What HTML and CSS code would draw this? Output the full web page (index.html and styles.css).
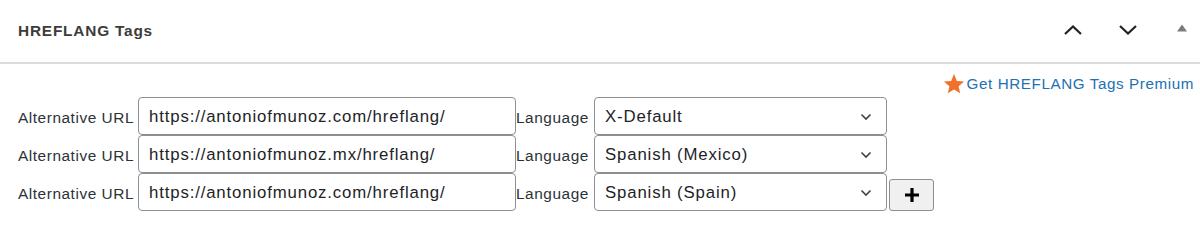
FILE: index.html
```html
<!DOCTYPE html>
<html>
<head>
<meta charset="utf-8">
<link rel="stylesheet" href="styles.css">
</head>
<body>
<div class="box">
  <div class="box-header">
    <h2 class="box-title">HREFLANG Tags</h2>
    <div class="box-actions">
      <span class="act act-up"><svg width="20" height="12" viewBox="0 0 20 12"><path d="M2 10 L10 2.5 L18 10" fill="none" stroke="#1d2327" stroke-width="2.2"/></svg></span>
      <span class="act act-down"><svg width="20" height="12" viewBox="0 0 20 12"><path d="M2 2 L10 9.5 L18 2" fill="none" stroke="#1d2327" stroke-width="2.2"/></svg></span>
      <span class="act act-toggle"><svg width="12" height="8" viewBox="0 0 12 8"><path d="M6 0.5 L11 7.5 L1 7.5 Z" fill="#787c82"/></svg></span>
    </div>
  </div>
  <div class="box-body">
    <div class="premium">
      <svg class="star" width="22" height="22" viewBox="0 0 24 24"><path d="M12 1.2 L15.1 8.6 L23 9.2 L17 14.4 L18.8 22.2 L12 18 L5.2 22.2 L7 14.4 L1 9.2 L8.9 8.6 Z" fill="#f0712c"/></svg>
      <a class="premium-link" href="#">Get HREFLANG Tags Premium</a>
    </div>
    <div class="row">
      <label class="lbl lbl-url">Alternative URL</label>
      <input class="url" type="text" value="https://antoniofmunoz.com/hreflang/">
      <label class="lbl lbl-lang">Language</label>
      <div class="select"><span>X-Default</span><svg width="12" height="8" viewBox="0 0 12 8"><path d="M1.5 1.5 L6 6 L10.5 1.5" fill="none" stroke="#3c434a" stroke-width="1.6"/></svg></div>
    </div>
    <div class="row">
      <label class="lbl lbl-url">Alternative URL</label>
      <input class="url" type="text" value="https://antoniofmunoz.mx/hreflang/">
      <label class="lbl lbl-lang">Language</label>
      <div class="select"><span>Spanish (Mexico)</span><svg width="12" height="8" viewBox="0 0 12 8"><path d="M1.5 1.5 L6 6 L10.5 1.5" fill="none" stroke="#3c434a" stroke-width="1.6"/></svg></div>
    </div>
    <div class="row">
      <label class="lbl lbl-url">Alternative URL</label>
      <input class="url" type="text" value="https://antoniofmunoz.com/hreflang/">
      <label class="lbl lbl-lang">Language</label>
      <div class="select"><span>Spanish (Spain)</span><svg width="12" height="8" viewBox="0 0 12 8"><path d="M1.5 1.5 L6 6 L10.5 1.5" fill="none" stroke="#3c434a" stroke-width="1.6"/></svg></div>
      <button class="add" type="button"><svg width="16" height="16" viewBox="0 0 16 16"><path d="M8 1 V15 M1 8 H15" stroke="#000" stroke-width="3.2"/></svg></button>
    </div>
  </div>
</div>
</body>
</html>
```

FILE: styles.css
```css
* { box-sizing: border-box; }
html, body { margin: 0; padding: 0; background: #fff; }
body { font-family: "Liberation Sans", Arial, sans-serif; color: #1d2327; }

.box-header {
  height: 64px;
  display: flex;
  align-items: center;
  justify-content: space-between;
  border-bottom: 2px solid #dcdcde;
  padding: 0 0 0 18px;
}
.box-title {
  margin: 0;
  font-size: 15.4px;
  font-weight: 700;
  color: #3c3c3c;
  letter-spacing: 0.8px;
}
.box-actions {
  display: flex;
  align-items: center;
  padding-right: 12px;
  padding-bottom: 2px;
}
.act { display: flex; align-items: center; justify-content: center; }
.act-up { width: 20px; margin-right: 35px; }
.act-down { width: 20px; margin-right: 38px; }
.act-toggle { width: 12px; padding-bottom: 4px; }

.box-body { padding: 8px 0 0 18px; }

.premium {
  display: flex;
  justify-content: flex-end;
  align-items: center;
  height: 25px;
  padding-right: 6px;
  padding-bottom: 2px;
}
.star { margin-right: 2px; margin-top: 1px; }
.premium-link {
  color: #2271b1;
  text-decoration: none;
  font-size: 15.2px;
  letter-spacing: 0.6px;
}

.row {
  display: flex;
  align-items: center;
  height: 38px;
}
.lbl {
  font-size: 15.4px;
  letter-spacing: 0.55px;
  color: #2c3338;
  white-space: nowrap;
  overflow: hidden;
  padding-top: 3px;
}
.lbl-url { width: 120px; flex: none; }
.lbl-lang { width: 78px; flex: none; }

.url {
  flex: none;
  width: 378px;
  height: 38px;
  border: 1px solid #8c8f94;
  border-radius: 4px;
  padding: 2px 10px 0;
  font-family: inherit;
  font-size: 16.8px;
  letter-spacing: 0.85px;
  color: #1d2327;
  background: #fff;
  outline: none;
}
.select {
  flex: none;
  width: 293px;
  height: 38px;
  border: 1px solid #8c8f94;
  border-radius: 4px;
  padding: 2px 14px 0 10px;
  display: flex;
  align-items: center;
  justify-content: space-between;
  font-size: 16.8px;
  letter-spacing: 0.85px;
  color: #1d2327;
}
.add {
  flex: none;
  width: 45px;
  height: 32px;
  margin: 5px 0 0 2px;
  border: 1px solid #8c8f94;
  border-radius: 3px;
  background: #f0f0f1;
  display: flex;
  align-items: center;
  justify-content: center;
  padding: 0;
}
```
